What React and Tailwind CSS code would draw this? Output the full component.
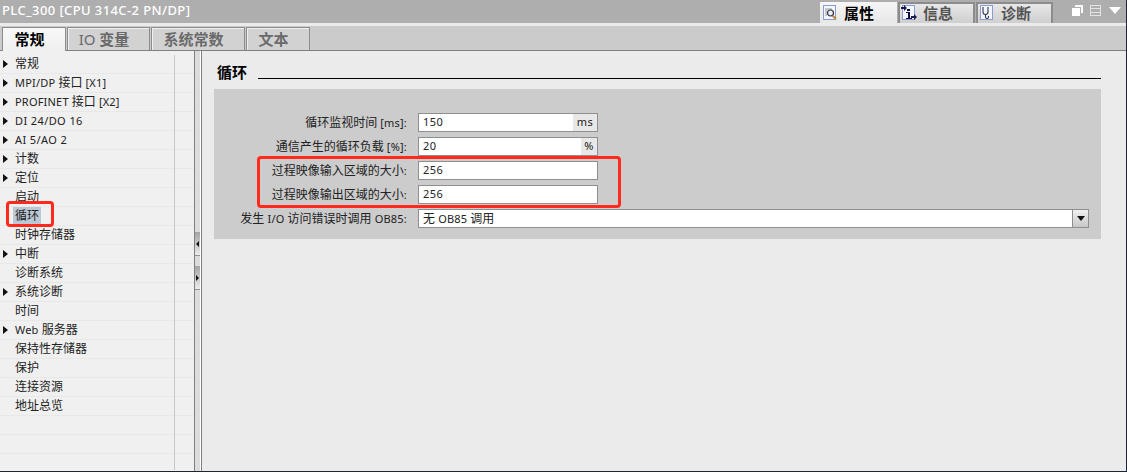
import React from "react";

const font = "font-['Noto_Sans','Noto_Sans_CJK_SC',sans-serif]";

function L({ children }) {
  return <span className="text-[11px] tracking-[0.2px]">{children}</span>;
}

const navItems = [
  ["常规", true],
  [<><L>MPI/DP </L>接口 <L>[X1]</L></>, true],
  [<><L>PROFINET </L>接口 <L>[X2]</L></>, true],
  [<span className="text-[11px] tracking-[0.4px]">DI 24/DO 16</span>, true],
  [<span className="text-[11px] tracking-[0.4px]">AI 5/AO 2</span>, true],
  ["计数", true],
  ["定位", true],
  ["启动", false],
  ["循环", false, true],
  ["时钟存储器", false],
  ["中断", true],
  ["诊断系统", false],
  ["系统诊断", true],
  ["时间", false],
  [<><L>Web </L>服务器</>, true],
  ["保持性存储器", false],
  ["保护", false],
  ["连接资源", false],
  ["地址总览", false],
  ["", false],
  ["", false],
];

function Tab({ label, active, width }) {
  return (
    <div
      className={
        active
          ? "h-[24px] -mb-px pr-[9px] flex items-center justify-center bg-gradient-to-b from-[#f8f8f8] to-[#f0f0f0] border-t border-x border-[#8c8c8c] text-[15px] font-bold text-black z-10"
          : "h-[23px] pr-[9px] flex items-center justify-center bg-[#d2d2d2] border-t border-x border-[#8c8c8c] shadow-[inset_1px_1px_0_#f0f0f0] text-[15px] font-bold text-[#6a6a6a]"
      }
      style={{ width }}
    >
      {label}
    </div>
  );
}

function Row({ label, children, className }) {
  return (
    <div className={"h-[23px] mb-[1px] flex items-center " + (className || "")}>
      <div className="w-[204px] pr-[11px] text-right text-[12px] whitespace-nowrap text-[#222222]">{label}</div>
      {children}
    </div>
  );
}

function Input({ value, unit, unitWidth }) {
  return (
    <div className="h-[19px] w-[180px] flex border border-[#8f8f8f] bg-white text-[11px] tracking-[0.5px] text-[#222222] items-center">
      <span className="flex-1 pl-[4px]">{value}</span>
      {unit && (
        <span className="h-full bg-[#e8e8e8] flex items-center justify-center" style={{ width: unitWidth }}>
          {unit}
        </span>
      )}
    </div>
  );
}

function InfoIcon({ kind }) {
  return (
    <svg width="16" height="16" viewBox="0 0 16 16" className="shrink-0">
      <rect x="1.5" y="0.5" width="12" height="14" fill="#f4f6ff" stroke="#8d9bd0" />
      {kind === "props" && (
        <g fill="none">
          <path d="M3 4h7M3 6h3M3 8h2M3 10h2" stroke="#9a9a9a" />
          <circle cx="8.5" cy="8" r="3" stroke="#30303a" strokeWidth="1.2" fill="#e8f0ff" />
          <path d="M10.5 10.5l3.5 3.5" stroke="#c08a3a" strokeWidth="2" />
        </g>
      )}
      {kind === "info" && (
        <g>
          <path d="M0 2h3V0l3 3-3 3V4H0z" fill="#1a1a50" />
          <rect x="6" y="4" width="3" height="2" fill="#101040" />
          <path d="M5 7h4v6h2v1H5v-1h2V8H5z" fill="#101040" />
          <path d="M10 11h3V9l3 3-3 3v-2h-3z" fill="#1a1a50" />
        </g>
      )}
      {kind === "diag" && (
        <g fill="none" stroke="#33334a" strokeWidth="1.1">
          <path d="M4 2v5a2.5 2.5 0 0 0 5 0V2" />
          <path d="M6.5 9.5V12a1.5 1.5 0 0 0 3 0v-1" />
        </g>
      )}
    </svg>
  );
}

function InfoTab({ label, kind, active }) {
  return (
    <div
      className={
        active
          ? "h-[24px] w-[77px] mt-[2px] pb-[2px] flex items-center gap-[6px] pl-[2px] text-[15px] font-bold text-black bg-gradient-to-b from-[#f6f6f6] to-[#e6e6e6]"
          : "h-[21px] w-[77px] mt-[2px] pb-[1px] flex items-center gap-[6px] pl-[1px] text-[15px] font-bold text-[#555555] bg-gradient-to-b from-[#e8e8e8] to-[#cfcfcf] border-t-2 border-x-2 border-[#8c8c8c]"
      }
    >
      <InfoIcon kind={kind} />
      {label}
    </div>
  );
}

export default function App() {
  return (
    <div className={"w-[1127px] h-[472px] flex flex-col overflow-hidden bg-[#ebebeb] border-r border-b border-[#1d2433] " + font}>
      {/* Title bar */}
      <div className="h-[23px] shrink-0 bg-[#aeaeae] flex items-start justify-between">
        <div className="pl-[2px] text-[13px] leading-[20px] text-white font-medium tracking-[0.4px]">PLC_300 [CPU 314C-2 PN/DP]</div>
        <div className="flex items-start gap-[1px] pr-[5px]">
          <InfoTab label="属性" kind="props" active />
          <InfoTab label="信息" kind="info" />
          <InfoTab label="诊断" kind="diag" />
          <div className="flex items-center gap-[7px] pl-[18px] pt-[5px]">
            <svg width="11" height="11" viewBox="0 0 11 11">
              <path d="M3 0h8v8H9V2H3z" fill="#fff" />
              <rect x="0" y="3" width="8" height="8" fill="#fff" />
            </svg>
            <svg width="11" height="11" viewBox="0 0 11 11">
              <rect x="0.5" y="0.5" width="10" height="10" fill="none" stroke="#e4e4e4" />
              <path d="M1 3.5h9M1 7.5h9" stroke="#e4e4e4" />
            </svg>
            <svg width="12" height="7" viewBox="0 0 12 7" className="ml-[1px]">
              <path d="M0 0h12L6 7z" fill="#fff" />
            </svg>
          </div>
        </div>
      </div>
      <div className="h-[3px] shrink-0 bg-[#ebebeb]" />

      {/* Tabs */}
      <div className="h-[25px] shrink-0 bg-[#cbcbcb] border-b border-[#808080] flex items-end pl-[2px] gap-[1px]">
        <Tab label="常规" active width={64} />
        <Tab label={<><span className="font-normal">IO</span>&nbsp;变量</>} width={83} />
        <Tab label="系统常数" width={94} />
        <Tab label="文本" width={64} />
      </div>

      {/* Body */}
      <div className="flex-1 flex min-h-0">
        {/* Nav */}
        <div className="w-[194px] shrink-0 bg-[#f0f0f0] flex flex-col">
          <div className="h-[4px] bg-[#f0f0f0]" />
          <div className="flex-1 relative">
            {navItems.map(([label, arrow, selected], i) => (
              <div key={i} className="h-[19px] flex items-center border-b border-[#e8e8e8] text-[12px] text-[#222222]">
                <span className="w-[15px] shrink-0 flex pl-[3px]">
                  {arrow && (
                    <svg width="5" height="8" viewBox="0 0 5 8">
                      <path d="M0 0l5 4-5 4z" fill="#111111" />
                    </svg>
                  )}
                </span>
                <span className={selected ? "bg-[#bcc8d4] leading-[18px] -ml-[2px] px-[2px]" : "whitespace-nowrap"}>{label}</span>
              </div>
            ))}
            <div className="absolute left-[174px] top-0 bottom-[1px] w-px bg-[#c8c8c8]" />
            <div className="absolute left-[6px] top-[146px] w-[48px] h-[26px] border-[3px] border-[#ff2a1c] rounded-[4px]" />
          </div>
        </div>
        {/* Splitter */}
        <div className="w-[8px] shrink-0 bg-[#dcdcdc] border-l border-r border-l-[#808080] border-r-[#808080] shadow-[inset_-1px_0_0_#ffffff] flex flex-col pt-[181px]">
          <div className="h-[24px] w-[5px] bg-gradient-to-b from-[#a4a4a4] to-[#ececec] border-b border-[#909090] flex items-center justify-center">
            <svg width="3" height="6" viewBox="0 0 3 6"><path d="M3 0L0 3l3 3z" fill="#111" /></svg>
          </div>
          <div className="h-[10px]" />
          <div className="h-[24px] w-[5px] bg-gradient-to-b from-[#a4a4a4] to-[#ececec] border-b border-[#909090] flex items-center justify-center">
            <svg width="3" height="6" viewBox="0 0 3 6"><path d="M0 0l3 3-3 3z" fill="#111" /></svg>
          </div>
        </div>

        {/* Content */}
        <div className="flex-1 pl-[12px] pr-[25px] pt-[11px]">
          <div className="flex items-center h-[20px] ml-[3px] gap-[11px] text-[15px] font-bold text-black">
            <span className="whitespace-nowrap">循环</span>
            <div className="flex-1 h-px bg-black mt-[12px]" />
          </div>
          <div className="mt-[7px] h-[150px] bg-[#cccccc] pt-[22px]">
            <Row label={<>循环监视时间 <L>[ms]:</L></>}><Input value="150" unit="ms" unitWidth={24} /></Row>
            <Row label={<>通信产生的循环负载 <L>[%]:</L></>}><Input value="20" unit="%" unitWidth={16} /></Row>
            <Row label={<>过程映像输入区域的大小<L>:</L></>}><Input value="256" /></Row>
            <Row label={<>过程映像输出区域的大小<L>:</L></>}><Input value="256" /></Row>
            <Row className="mt-[1px]" label={<>发生 <L>I/O</L> 访问错误时调用 <L>OB85:</L></>}>
              <div className="h-[19px] w-[671px] flex items-center border border-[#8f8f8f] bg-white text-[12px] text-[#222222]">
                <span className="flex-1 pl-[4px]">无 <L>OB85</L> 调用</span>
                <span className="h-full w-[16px] border-l border-[#8f8f8f] bg-gradient-to-b from-[#f0f0f0] to-[#c8c8c8] flex items-center justify-center">
                  <svg width="8" height="5" viewBox="0 0 8 5"><path d="M0 0h8L4 5z" fill="#111" /></svg>
                </span>
              </div>
            </Row>
            <div className="absolute left-[257px] top-[156px] w-[364px] h-[52px] border-[3px] border-[#ff2a1c] rounded-[4px]" />
          </div>
        </div>
      </div>
    </div>
  );
}
